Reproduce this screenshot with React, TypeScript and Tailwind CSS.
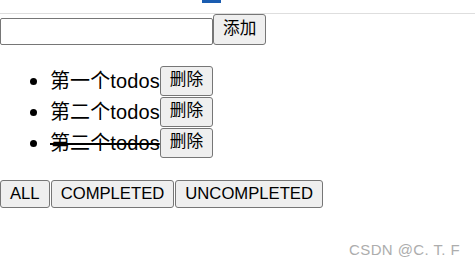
import React, { useState } from "react";

const font = "font-['Liberation_Sans','Noto_Sans_CJK_SC',sans-serif]";
const btn =
	"border border-[#767676] rounded-[3px] bg-[#efefef] text-black text-[16.67px] leading-none px-[9px] " +
	font;

const todos = [
	{ id: 1, title: "第一个todos", done: false },
	{ id: 2, title: "第二个todos", done: false },
	{ id: 3, title: "第二个todos", done: true },
];

export default function App() {
	const [text, setText] = useState("");

	return (
		<div className={`relative w-[475px] h-[269px] bg-white text-black ${font}`}>
			{/* top strip of the page above */}
			<div className="h-[13px] relative">
				<div className="absolute left-[202px] top-0 w-[19px] h-[3px] bg-[#1a5cb0]" />
			</div>
			<div className="h-px bg-[#dedede]" />

			{/* input row */}
			<div className="flex items-end">
				<input
					value={text}
					onChange={(e) => setText(e.target.value)}
					className="w-[213px] h-[27px] border border-[#767676] rounded-[2px] outline-none px-1 text-[16px]"
				/>
				<button className={`${btn} h-[31px]`}>添加</button>
			</div>

			{/* todo list */}
			<ul className="mt-[20px] pl-[50px]">
				{todos.map((t) => (
					<li key={t.id} className="flex items-center h-[31px] relative">
						<span className="absolute left-[-20px] top-[13px] w-[7px] h-[7px] rounded-full bg-black" />
						<span
							className={`text-[20px] leading-none tracking-[0.1px] ${t.done ? "line-through" : ""}`}
						>
							{t.title}
						</span>
						<button className={`${btn} h-[30px]`}>删除</button>
					</li>
				))}
			</ul>

			{/* filters */}
			<div className="flex gap-px mt-[22px]">
				<button className={`${btn} h-[28px]`}>ALL</button>
				<button className={`${btn} h-[28px]`}>COMPLETED</button>
				<button className={`${btn} h-[28px] px-[7px]`}>UNCOMPLETED</button>
			</div>

			<div className="absolute right-[15px] bottom-[8px] text-[15px] text-[#adadad] tracking-[0.4px]">
				CSDN @C. T. F
			</div>
		</div>
	);
}
